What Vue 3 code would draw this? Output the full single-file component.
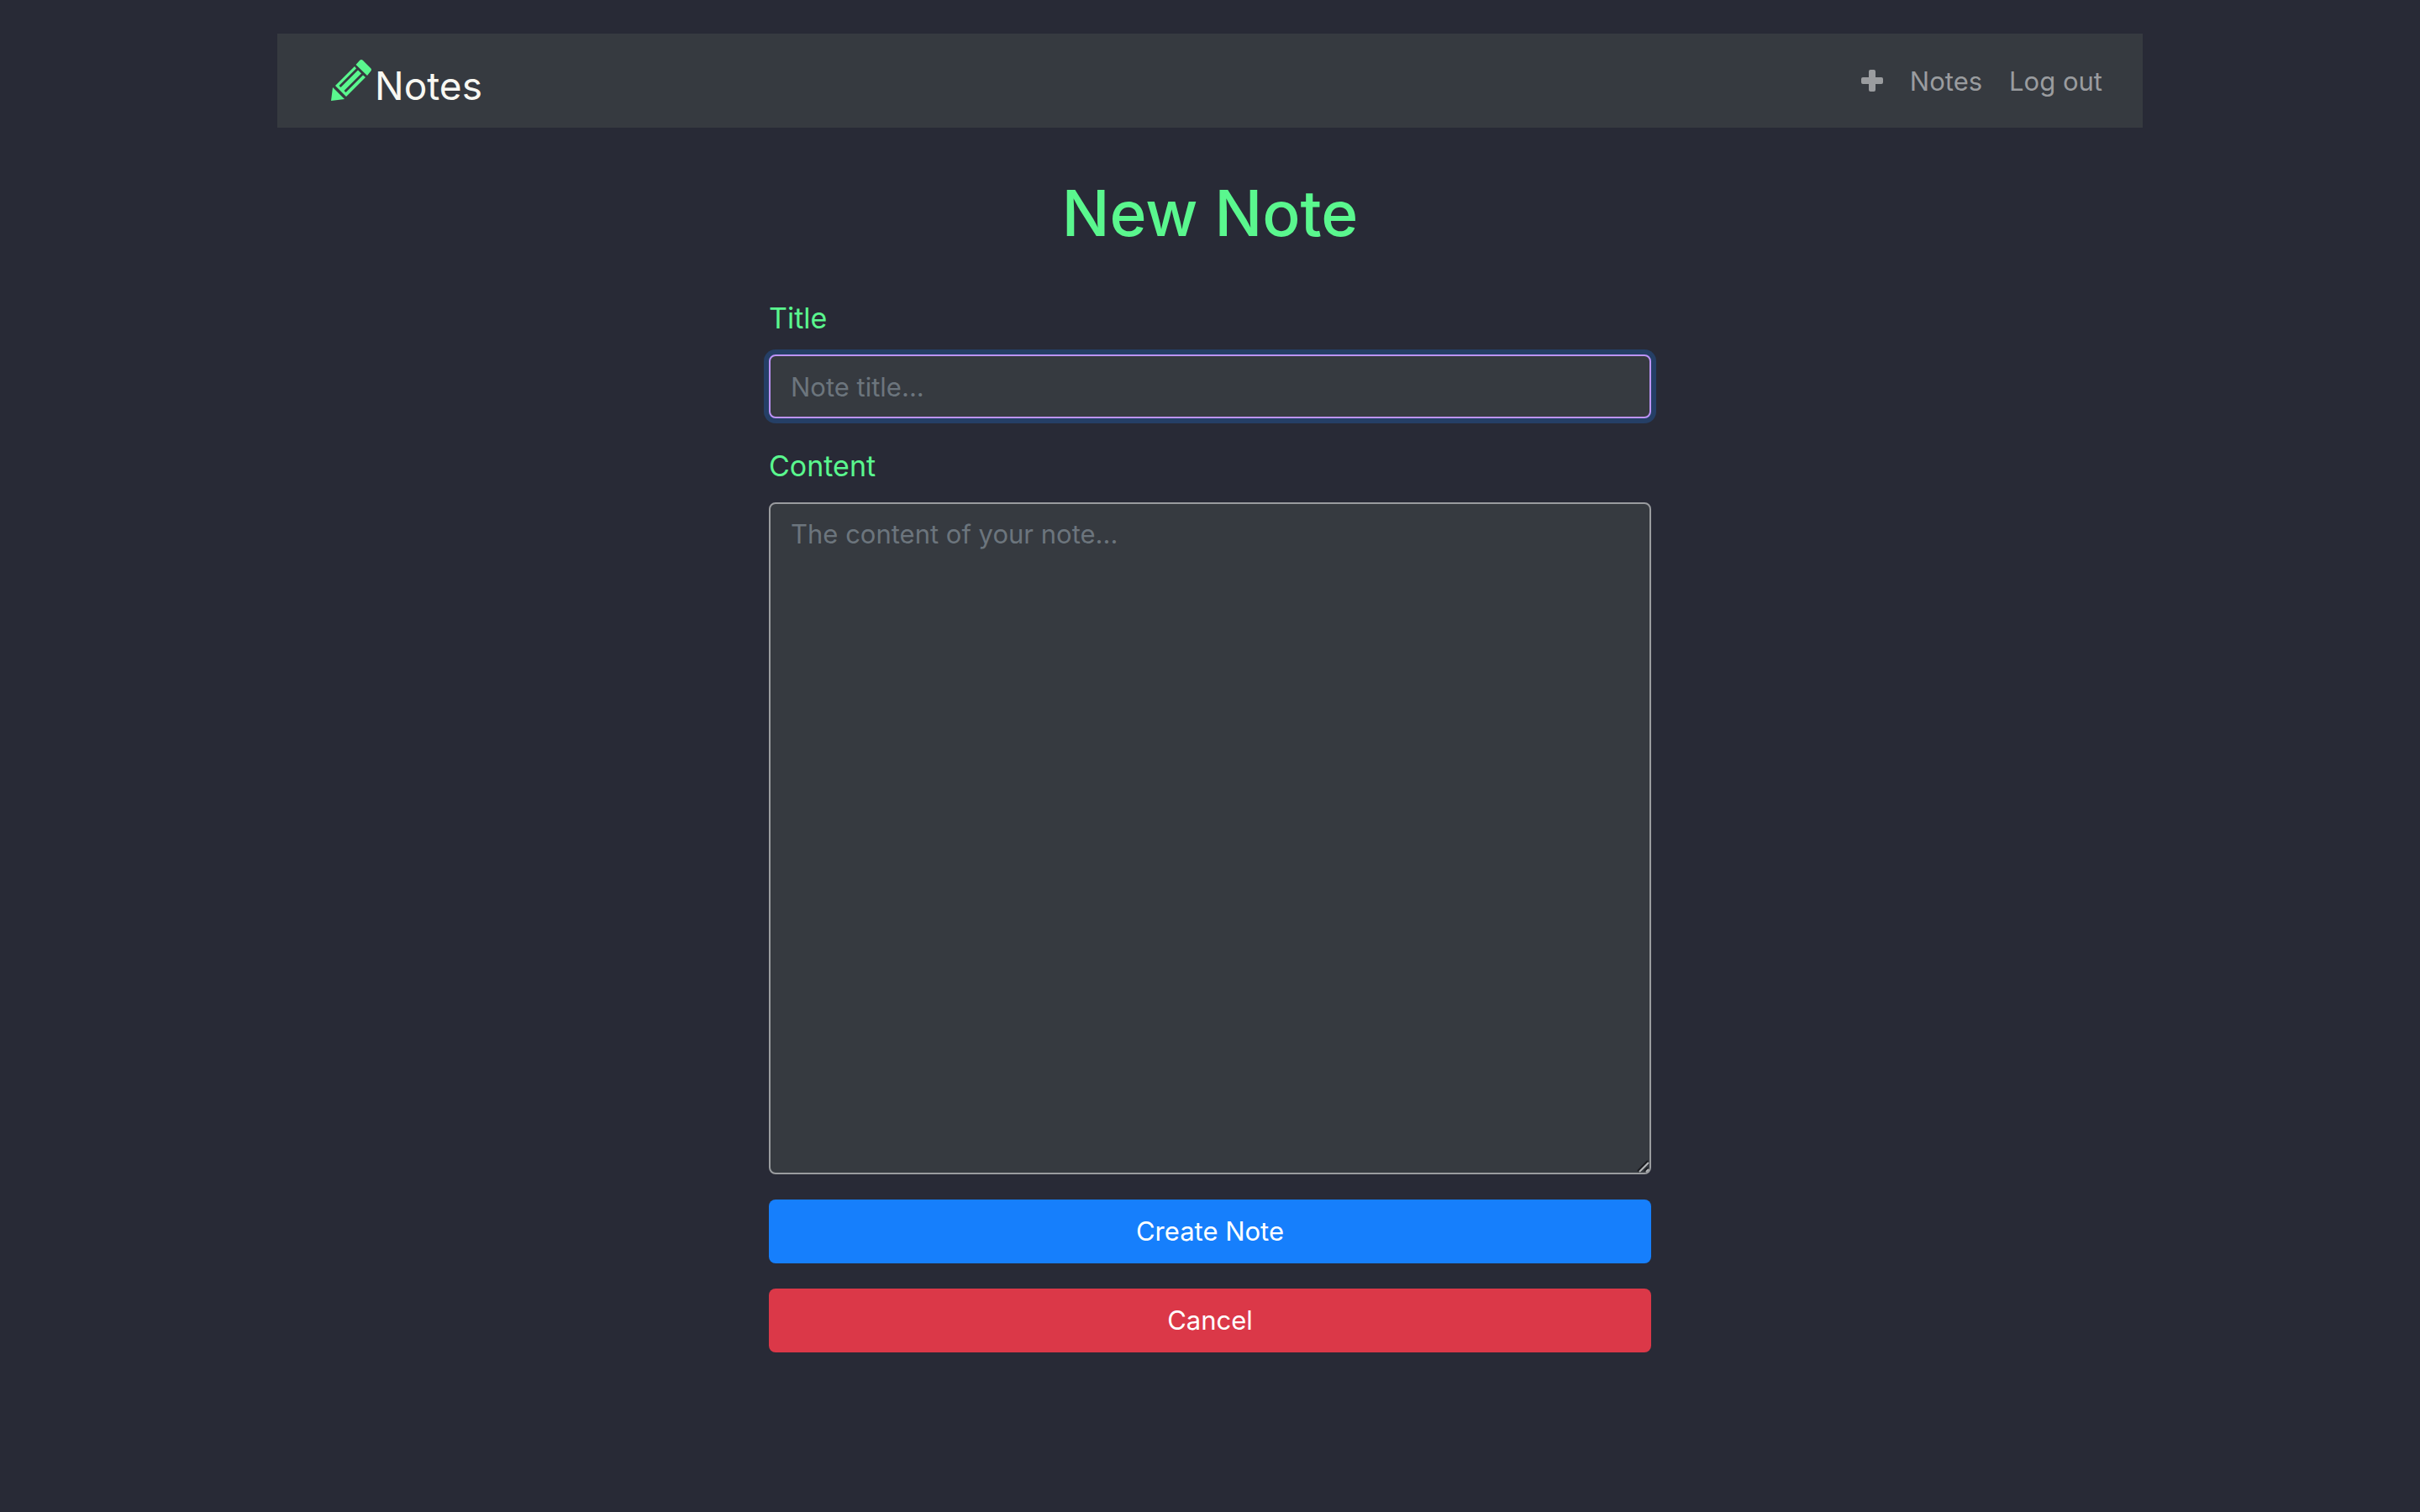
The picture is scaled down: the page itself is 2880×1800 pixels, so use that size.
<script setup>
import { ref } from 'vue'

const title = ref('')
const content = ref('')
const activeField = ref('title')
</script>

<template>
  <div class="page">
    <div class="container">
      <nav class="navbar">
        <a class="brand" href="#">
          <svg class="pencil" viewBox="0 0 48 50" aria-hidden="true">
            <path d="M2 33 L16 47 L0 49 Z" />
            <path d="M5 31 L28 8 L30 10.500 L9.500 31 L11.500 33 L32 12.500 L36 16.500 L15.500 37 L17.500 39 L38 18.500 L41 21 L18 44 Z" />
            <path d="M29.500 6 L34 1 Q36 -1 38 1 L47 10 Q49 12 47 14 L43 19 Z" />
          </svg>
          <span>Notes</span>
        </a>
        <div class="links">
          <a href="#" aria-label="New note">
            <svg class="plus" viewBox="0 0 26 26" aria-hidden="true">
              <path d="M11 0h4q2 0 2 2v7h7q2 0 2 2v4q0 2-2 2h-7v7q0 2-2 2h-4q-2 0-2-2v-7H2q-2 0-2-2v-4q0-2 2-2h7V2q0-2 2-2z" />
            </svg>
          </a>
          <a class="link" href="#">Notes</a>
          <a class="link" href="#">Log out</a>
        </div>
      </nav>

      <main>
        <h1>New Note</h1>
        <form class="form" @submit.prevent>
          <label for="title">Title</label>
          <input
            id="title"
            v-model="title"
            type="text"
            placeholder="Note title..."
            :class="{ active: activeField === 'title' }"
            @focus="activeField = 'title'"
          />
          <label for="content">Content</label>
          <div class="area">
            <textarea
              id="content"
              v-model="content"
              placeholder="The content of your note..."
              :class="{ active: activeField === 'content' }"
              @focus="activeField = 'content'"
            ></textarea>
            <svg class="grip" viewBox="0 0 18 18" aria-hidden="true">
              <path class="dark" d="M2 14 L14 2 M10 14 L14 10" />
              <path class="light" d="M4 15 L15 4 M12 15 L15 12" />
            </svg>
          </div>
          <button class="create" type="submit">Create Note</button>
          <button class="cancel" type="button">Cancel</button>
        </form>
      </main>
    </div>
  </div>
</template>

<style>
body {
  margin: 0;
  background: #282a36;
}
</style>

<style scoped>
.page {
  min-height: 100vh;
  box-sizing: border-box;
  padding: 40px 30px;
  background: #282a36;
  font-family: Inter, "Liberation Sans", sans-serif;
  font-size: 31px;
  line-height: 48px;
}
.container {
  max-width: 2220px;
  margin: 0 auto;
}
.navbar {
  display: flex;
  align-items: center;
  justify-content: space-between;
  box-sizing: border-box;
  min-height: 112px;
  padding: 16px 48px 16px 64px;
  background: #363a40;
}
a {
  color: #9a9c9f;
  text-decoration: none;
}
.brand {
  display: flex;
  align-items: center;
  gap: 4px;
  color: #f8f8f2;
  font-size: 46px;
}
.brand span {
  padding-top: 12px;
}
.pencil {
  width: 48px;
  height: 50px;
  fill: #5af78e;
}
.links {
  display: flex;
  align-items: center;
  gap: 32px;
}
.link {
  padding-top: 2px;
}
.plus {
  display: block;
  width: 26px;
  height: 26px;
  fill: #9a9c9f;
}
h1 {
  margin: 54px 0 50px;
  color: #5af78e;
  font-size: 75px;
  font-weight: 500;
  line-height: 96px;
  text-align: center;
}
.form {
  display: flex;
  flex-direction: column;
  max-width: 1050px;
  margin: 0 auto;
}
label {
  margin-bottom: 16px;
  color: #5af78e;
  font-size: 34px;
  line-height: 54px;
}
input,
textarea {
  box-sizing: border-box;
  width: 100%;
  padding: 12px 24px;
  border: 2px solid #9a9c9f;
  border-radius: 8px;
  outline: none;
  background: #363a40;
  color: #f8f8f2;
  font: inherit;
}
input {
  height: 76px;
  margin-bottom: 30px;
}
textarea {
  display: block;
  height: 800px;
  resize: vertical;
}
textarea::-webkit-resizer {
  background: transparent;
}
::placeholder {
  color: #6c757d;
  opacity: 1;
}
.active {
  border-color: #bd93f9;
  box-shadow: 0 0 0 6px #253f66;
}
.area {
  position: relative;
}
.grip {
  position: absolute;
  right: 0;
  bottom: 0;
  width: 18px;
  height: 18px;
  fill: none;
  stroke-width: 2;
  pointer-events: none;
}
.dark {
  stroke: #1b1c20;
}
.light {
  stroke: #b5b7b9;
}
button {
  height: 76px;
  margin-top: 30px;
  padding: 12px 24px;
  border: 0;
  border-radius: 8px;
  color: #fff;
  font: inherit;
  cursor: pointer;
}
.create {
  background: #167ffc;
}
.cancel {
  background: #db3848;
}
</style>
